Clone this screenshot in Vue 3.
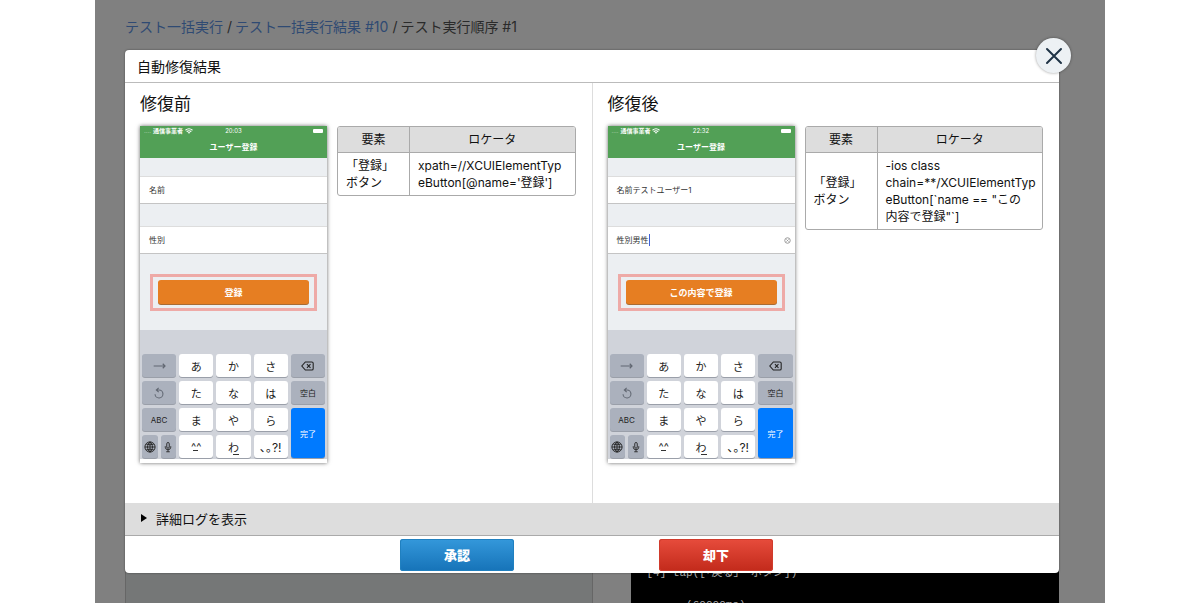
<script setup>
const panes = [
  {
    id: 'before',
    title: '修復前',
    time: '20:03',
    name: '',
    gender: '',
    focused: false,
    submit: '登録',
    locator: "xpath=//XCUIElementTyp\neButton[@name='登録']",
  },
  {
    id: 'after',
    title: '修復後',
    time: '22:32',
    name: 'テストユーザー1',
    gender: '男性',
    focused: true,
    submit: 'この内容で登録',
    locator: '-ios class\nchain=**/XCUIElementTyp\neButton[`name == "この\n内容で登録"`]',
  },
]
const kana = ['あ', 'か', 'さ', 'た', 'な', 'は', 'ま', 'や', 'ら', '^^', 'わ', '､｡?!']
const rows = [0, 3, 6, 9].map((i) => kana.slice(i, i + 3))
</script>

<template>
  <div class="page">
    <div class="screen">
      <nav class="crumbs">
        <a href="#">テスト一括実行</a><span>/</span><a href="#">テスト一括実行結果 #10</a><span>/</span><span class="current">テスト実行順序 #1</span>
      </nav>
      <div class="behind">
        <div class="preview"></div>
        <pre class="console">[4] tap([「戻る」 ボタン])

      (60000ms)</pre>
      </div>

      <section class="modal" role="dialog" aria-labelledby="modal-title">
        <button class="close" type="button" aria-label="閉じる">
          <svg viewBox="0 0 34 34" width="34" height="34"><path d="M10 10 L24 24 M24 10 L10 24" /></svg>
        </button>
        <h1 id="modal-title">自動修復結果</h1>
        <div class="panes">
          <section v-for="p in panes" :key="p.id" class="pane">
            <h2>{{ p.title }}</h2>
            <div class="compare">
              <div class="phone">
                <div class="green">
                  <div class="status">
                    <span class="carrier"><i>....</i><b>通信事業者</b>
                      <svg viewBox="0 0 16 12" width="8" height="6"><path d="M1 4.5 Q8 -1.5 15 4.5 M3.5 7.5 Q8 3.5 12.5 7.5" fill="none" stroke="#fff" stroke-width="2.2" /><path d="M5.5 9 Q8 7 10.5 9 L8 11.5 Z" fill="#fff" /></svg>
                    </span>
                    <span>{{ p.time }}</span>
                    <span class="battery"><em></em></span>
                  </div>
                  <div class="title">ユーザー登録</div>
                </div>
                <div class="form">
                  <label class="field"><span>名前</span><input type="text" :value="p.name" /></label>
                  <label class="field">
                    <span>性別</span>
                    <span v-if="p.focused" class="typed">{{ p.gender }}</span>
                    <input type="text" aria-label="性別" />
                    <svg v-if="p.focused" class="clear" viewBox="0 0 14 14" width="7" height="7"><circle cx="7" cy="7" r="5.5" /><path d="M5 5 L9 9 M9 5 L5 9" /></svg>
                  </label>
                  <div class="highlight"><button type="button">{{ p.submit }}</button></div>
                </div>
                <div class="keyboard">
                  <button type="button" class="key dim" aria-label="次へ"><svg viewBox="0 0 20 12" width="13" height="8"><path d="M1 6 H18.5 M15 2.5 L18.5 6 L15 9.5" /></svg></button>
                  <button v-for="k in rows[0]" :key="k" type="button" class="key light">{{ k }}</button>
                  <button type="button" class="key" aria-label="削除"><svg viewBox="0 0 24 18" width="13" height="10"><path d="M8 1.5 H20 Q22.5 1.5 22.5 4 V14 Q22.5 16.5 20 16.5 H8 L1.5 9 Z M11 5.5 L17.5 12.5 M17.5 5.5 L11 12.5" stroke-width="2" /></svg></button>

                  <button type="button" class="key dim" aria-label="戻す"><svg viewBox="0 0 20 20" width="12" height="12"><path d="M9.5 1.5 L5.5 5 L9.5 8.5 M5.5 5 H10 A6.6 6.6 0 1 1 3.4 12" /></svg></button>
                  <button v-for="k in rows[1]" :key="k" type="button" class="key light">{{ k }}</button>
                  <button type="button" class="key">空白</button>

                  <button type="button" class="key">ABC</button>
                  <button v-for="k in rows[2]" :key="k" type="button" class="key light">{{ k }}</button>
                  <button type="button" class="key done">完了</button>

                  <div class="pair">
                    <button type="button" class="key" aria-label="言語"><svg viewBox="0 0 20 20" width="12" height="12"><path d="M10 1.5 A8.5 8.5 0 1 0 10 18.5 A8.5 8.5 0 1 0 10 1.5 M10 1.5 V18.5 M1.5 10 H18.5 M3.5 5 Q10 8 16.5 5 M3.5 15 Q10 12 16.5 15 M10 1.5 C4.5 6 4.5 14 10 18.5 C15.5 14 15.5 6 10 1.5" /></svg></button>
                    <button type="button" class="key" aria-label="音声入力"><svg viewBox="0 0 16 22" width="8" height="12"><path d="M8 2 Q10.5 2 10.5 4.5 V11 Q10.5 13.5 8 13.5 Q5.5 13.5 5.5 11 V4.5 Q5.5 2 8 2 M2.5 9.5 V11.5 Q3 16.5 8 16.5 Q13 16.5 13.5 11.5 V9.5 M8 16.5 V20 M4.5 20.5 H11.5" stroke-width="1.8" /></svg></button>
                  </div>
                  <button v-for="(k, i) in rows[3]" :key="k" type="button" class="key light" :class="'last' + i">{{ k }}</button>
                </div>
              </div>
              <table>
                <thead><tr><th scope="col">要素</th><th scope="col">ロケータ</th></tr></thead>
                <tbody><tr><td class="element">「登録」<br />ボタン</td><td class="locator">{{ p.locator }}</td></tr></tbody>
              </table>
            </div>
          </section>
        </div>
        <button type="button" class="log"><svg viewBox="0 0 6 8" width="6" height="8"><path d="M0 0 L6 4 L0 8 Z" /></svg>詳細ログを表示</button>
        <footer>
          <button type="button" class="approve">承認</button>
          <button type="button" class="reject">却下</button>
        </footer>
      </section>
    </div>
  </div>
</template>

<style>
body { margin: 0; background: #fff; }
</style>

<style scoped>
* { box-sizing: border-box; }
button { font: inherit; color: inherit; border: 0; padding: 0; margin: 0; }
.page {
  height: 100vh;
  overflow: hidden;
  padding: 0 95px;
  font-family: Inter, "Noto Sans CJK JP", sans-serif;
  color: #111;
}
.screen {
  position: relative;
  height: 100%;
  padding: 0 46px 0 30px;
  background: #808080;
  display: flex;
  flex-direction: column;
}
.crumbs { height: 54px; line-height: 54px; font-size: 14px; white-space: pre; color: #2a2a2a; }
.crumbs a { color: #2f4a73; text-decoration: none; }
.crumbs > span { padding: 0 3px 0 4px; }
.crumbs > .current { padding: 0; }
.behind { flex: 1; min-height: 0; display: grid; grid-template-columns: 467fr 428fr; gap: 38px; }
.preview { background: #757777; border: 1px solid #666; border-width: 0 1px; }
.console {
  min-width: 0;
  margin: 0;
  padding: 511px 16px 0;
  background: #000;
  color: #aaa;
  font: 11px/16px "Liberation Mono", "Noto Sans CJK JP", monospace;
  overflow: hidden;
}
.modal {
  position: absolute;
  top: 50px;
  left: 30px;
  right: 46px;
  background: #fff;
  border-radius: 4px;
  box-shadow: 0 0 2px rgba(0, 0, 0, 0.5);
}
.close {
  position: absolute;
  top: -12px;
  right: -12px;
  width: 35px;
  height: 35px;
  display: grid;
  place-items: center;
  border-radius: 50%;
  background: #edf1f4;
  box-shadow: 0 0 3px rgba(0, 0, 0, 0.4);
}
.close path { fill: none; stroke: #1f3345; stroke-width: 2; stroke-linecap: round; }
h1 {
  margin: 0;
  padding: 0 12px;
  height: 33px;
  line-height: 34px;
  border-bottom: 1px solid #bbb;
  font-size: 14px;
  font-weight: 400;
}
.panes { display: flex; min-height: 420px; }
.pane { flex: 1; min-width: 0; padding: 9px 16px 0 15px; }
.pane:first-child { border-right: 1px solid #ddd; }
h2 { margin: 0 0 10px; font-size: 17px; line-height: 24px; font-weight: 400; }
.compare { display: flex; align-items: flex-start; gap: 10px; }
.phone {
  flex: none;
  width: 187px;
  padding-bottom: 4px;
  background: #fff;
  box-shadow: 0 0 4px rgba(0, 0, 0, 0.6);
}
.green { height: 32px; background: #52a056; color: #fff; }
.status {
  display: grid;
  grid-template-columns: 1fr auto 1fr;
  align-items: center;
  height: 10px;
  padding: 0 4px;
  font-size: 6px;
  line-height: 10px;
}
.carrier { display: flex; align-items: center; gap: 2px; white-space: nowrap; }
.carrier i { font-style: normal; opacity: 0.6; }
.battery { display: flex; justify-content: flex-end; }
.battery em { width: 10px; height: 4px; border-radius: 1px; background: #fff; }
.title { text-align: center; font-size: 8px; font-weight: 700; line-height: 22px; }
.form { height: 172px; padding-top: 18px; background: #eceff2; color: #333; font-size: 8px; }
.field {
  display: flex;
  align-items: center;
  height: 28px;
  padding: 0 4px 0 9px;
  background: #fff;
  border-top: 1px solid #ddd;
  border-bottom: 1px solid #c4c4c4;
  line-height: 12px;
}
.field + .field { margin-top: 22px; }
.field input { flex: 1; min-width: 0; height: 12px; border: 0; padding: 0; background: none; font: inherit; color: inherit; outline: 0; }
.typed { border-right: 1px solid #4361d8; }
.clear { fill: none; stroke: #999; stroke-width: 2; }
.highlight { margin: 20px 10px 0; padding: 3px 5px 4px; border: 3px solid #eeaaa7; }
.highlight button {
  display: block;
  width: 100%;
  height: 24px;
  border-radius: 3px;
  background: #e67e22;
  box-shadow: 0 1px 0 #a76b35;
  color: #fff;
  font-size: 9px;
  font-weight: 700;
}
.keyboard {
  display: grid;
  grid-template-columns: repeat(5, 1fr);
  grid-auto-rows: 23px;
  gap: 4px 3px;
  padding: 24px 2px 1px;
  background: #d0d3da;
}
.key {
  position: relative;
  display: grid;
  place-items: center;
  min-width: 0;
  border-radius: 3px;
  background: #abb1bd;
  box-shadow: 0 1px 0 #9a9fa9;
  color: #222;
  font-size: 8px;
}
.key svg { fill: none; stroke: #222; stroke-width: 1.5; }
.key.dim svg { stroke: #616772; stroke-width: 1.8; }
.key.light { background: #fff; font-size: 11px; }
.key.light.last2 { font-size: 12px; }
.last0::after, .last1::after {
  content: "";
  position: absolute;
  bottom: 7px;
  left: calc(50% - 3px);
  width: 5px;
  height: 1px;
  background: #333;
}
.last1::after { bottom: 3px; left: 50%; width: 6px; }
.key.done { grid-row: 3 / span 2; grid-column: 5; background: #007aff; color: #fff; }
.pair { display: grid; grid-template-columns: 1fr 1fr; gap: 3px; }
table {
  flex: 1;
  min-width: 0;
  table-layout: fixed;
  border: 1px solid #aaa;
  border-radius: 3px;
  border-spacing: 0;
  overflow: hidden;
  font-size: 12px;
  line-height: 17px;
}
th { height: 26px; padding: 0; background: #ddd; border-bottom: 1px solid #aaa; font-weight: 400; }
th:first-child { width: 71px; }
th + th, td + td { border-left: 1px solid #aaa; }
td { padding: 4px 4px 4px 8px; }
td.element { white-space: nowrap; }
td.locator { white-space: pre-line; overflow-wrap: anywhere; }
.log {
  display: flex;
  align-items: center;
  gap: 9px;
  width: 100%;
  height: 33px;
  padding: 0 16px 2px;
  background: #ddd;
  border-bottom: 1px solid #aaa;
  font-size: 13px;
}
footer { display: flex; justify-content: center; gap: 145px; padding: 3px 11px 2px 0; }
footer button { width: 114px; height: 32px; padding-bottom: 2px; border-radius: 3px; color: #fff; font-size: 13px; font-weight: 900; }
.approve { background: linear-gradient(#3498db, #1673b8); box-shadow: inset 0 0 0 1px #2080c0; }
.reject { background: linear-gradient(#e74c3c, #c22a1b); box-shadow: inset 0 0 0 1px #d03b2c; }
</style>
